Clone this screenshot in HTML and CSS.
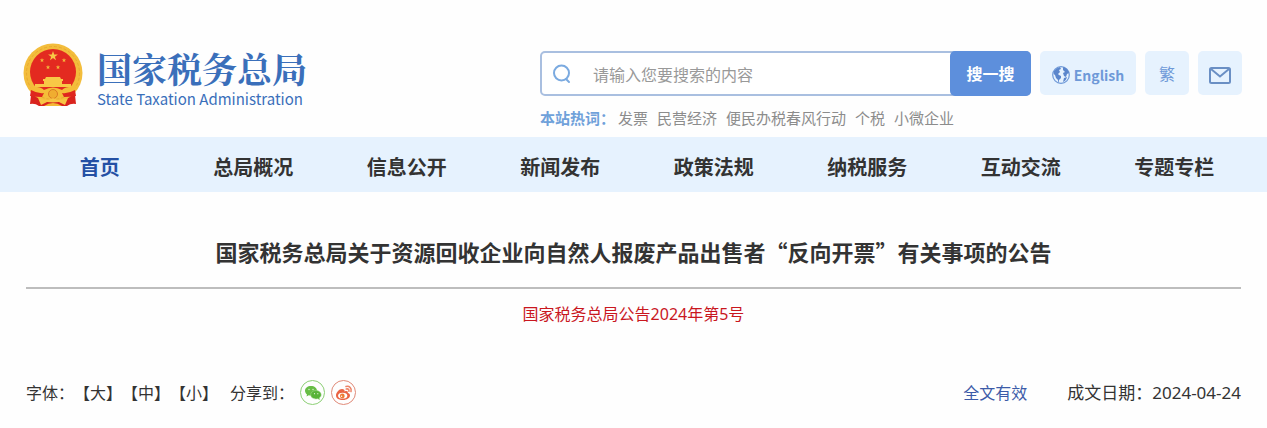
FILE: index.html
```html
<!DOCTYPE html>
<html lang="zh-CN">
<head>
<meta charset="utf-8">
<meta name="viewport" content="width=device-width, initial-scale=1">
<title>国家税务总局</title>
<link rel="stylesheet" href="styles.css">
</head>
<body>
<header class="header">
  <a class="brand" href="#">
    <svg class="emblem" viewBox="0 0 60 64" aria-hidden="true">
      <path d="M9 43L7 61q5-1 9 2h28q4-3 9-2l-2-18z" fill="#d9231d"/>
      <circle cx="30" cy="30" r="29.500" fill="#f3bd3c"/>
      <circle cx="30" cy="30" r="26.500" fill="none" stroke="#e9a92f" stroke-width="1" stroke-dasharray="3 2"/>
      <circle cx="30" cy="29" r="23" fill="#e32a20"/>
      <path d="M30 8l1.200 3.500h3.700l-3 2.200 1.100 3.600-3-2.200-3 2.200 1.100-3.600-3-2.200h3.700z" fill="#f8c846"/>
      <g fill="#f3b53b"><path d="M19 15l.6 1.600h1.700l-1.400 1 .5 1.700-1.400-1-1.400 1 .5-1.700-1.400-1h1.700z"/><path d="M41 15l.6 1.600h1.700l-1.400 1 .5 1.700-1.400-1-1.400 1 .5-1.700-1.400-1h1.700z"/><path d="M25 22l.6 1.600h1.700l-1.400 1 .5 1.700-1.400-1-1.400 1 .5-1.700-1.400-1h1.700z"/><path d="M35 22l.6 1.600h1.700l-1.400 1 .5 1.700-1.400-1-1.400 1 .5-1.700-1.400-1h1.700z"/></g>
      <path d="M23 34h14l1 2h2v2h-1v3h9v3H12v-3h9v-3h-1v-2h2z" fill="#f8c846"/>
      <path d="M7 44q10-1 14 3 9-5 18 0 4-4 14-3-2 6-8 9-4-1-8 1-7-4-14 0-4-2-8-1-6-3-8-9z" fill="#f5bd38"/>
      <path d="M8 47q7 4 13 3l-2 4q-6 0-12-1zM52 47q-7 4-13 3l2 4q6 0 12-1z" fill="#df261e"/>
      <circle cx="30" cy="51" r="4.500" fill="#f0ad30" stroke="#dc7a24"/>
      <path d="M15 55q9 4 15 0 6 4 15 0l-3 7-6-3H24l-6 3z" fill="#f7c545"/>
      <path d="M21 63q9-6 18 0z" fill="#f3b936"/>
    </svg>
    <span class="brand-text">
      <span class="brand-name">国家税务总局</span>
      <span class="brand-en">State Taxation Administration</span>
    </span>
  </a>
  <div class="tools">
    <div class="tool-row">
      <form class="search">
        <svg class="search-icon" viewBox="0 0 20 20" aria-hidden="true"><circle cx="9.500" cy="9" r="7.500"/><path d="M14 15l3 3"/></svg>
        <input class="search-input" type="text" aria-label="搜索" placeholder="请输入您要搜索的内容">
        <button class="search-button" type="button">搜一搜</button>
      </form>
      <a class="tile tile-wide" href="#">
        <svg class="globe" viewBox="0 0 18 18" aria-hidden="true"><circle cx="9" cy="9" r="8.300" fill="#e6f2fe" stroke="#6e99d8" stroke-width="1.200"/><path d="M2 5q2-3 6-4l1 2-2 1 1 2-2 2 1 1 2 1v2l-2 2v3q-1-1-1-3l-2-2-1-3q-2-1-1-4zM11 1q5 1 6 6l-2 1-1 3-2-1-1-3 2-1-2-2zM12 12l3-1q-1 4-4 5z" fill="#5b86cc"/></svg>
        English
      </a>
      <a class="tile" href="#">繁</a>
      <a class="tile" href="#" aria-label="邮箱">
        <svg class="mail" viewBox="0 0 22 17" aria-hidden="true"><rect x="1" y="1" width="20" height="15" rx="1.500"/><path d="M2 2l9 7.500L20 2"/></svg>
      </a>
    </div>
    <div class="hot">
      <strong class="hot-label">本站热词：</strong>
      <a href="#">发票</a><a href="#">民营经济</a><a href="#">便民办税春风行动</a><a href="#">个税</a><a href="#">小微企业</a>
    </div>
  </div>
</header>
<nav class="nav">
  <a class="active" href="#">首页</a><a href="#">总局概况</a><a href="#">信息公开</a><a href="#">新闻发布</a><a href="#">政策法规</a><a href="#">纳税服务</a><a href="#">互动交流</a><a href="#">专题专栏</a>
</nav>
<main class="article">
  <h1 class="title">国家税务总局关于资源回收企业向自然人报废产品出售者“反向开票”有关事项的公告</h1>
  <p class="number">国家税务总局公告2024年第5号</p>
  <div class="meta">
    <span class="label">字体：</span>
    <div class="sizes"><button type="button">【大】</button><button type="button">【中】</button><button type="button">【小】</button></div>
    <span class="share-label">分享到：</span>
    <a class="share wechat" href="#" aria-label="微信">
      <svg viewBox="0 0 18 18" aria-hidden="true"><path d="M7 2C3.500 2 1 4.100 1 6.800c0 1.500.8 2.800 2 3.700l-.5 2 2.200-1.200c.8.200 1.500.3 2.300.3 3.500 0 6-2.100 6-4.800S10.500 2 7 2z" fill="#67bd45"/><path d="M12 6.500c-3 0-5.300 1.900-5.300 4.300S9 15 12 15l1.800-.3 2 1.100-.5-1.800c1.200-.8 1.900-1.900 1.900-3.200 0-2.400-2.200-4.300-5.200-4.300z" fill="#58b338" stroke="#a9dc95" stroke-width=".5"/><g fill="#dff2d8"><circle cx="5" cy="5.500" r=".7"/><circle cx="9" cy="5.500" r=".7"/><circle cx="10.500" cy="9.700" r=".6"/><circle cx="13.800" cy="9.700" r=".6"/></g></svg>
    </a>
    <a class="share weibo" href="#" aria-label="微博">
      <svg viewBox="0 0 18 18" aria-hidden="true"><path d="M7 5C4 5 1 8.500 1 11.500S4 16 8 16s7-2.200 7-4.500c0-1.500-1-2.200-2.200-2.500.4-1.500-.5-2.600-3.300-1.500C10 6 9 5 7 5z" fill="#ea6444"/><ellipse cx="7.700" cy="11.700" rx="4.600" ry="2.900" fill="#fff"/><circle cx="7.300" cy="11.900" r="2.400" fill="#ed7b35"/><circle cx="6.600" cy="12.200" r=".7" fill="#fff"/><path d="M11 2.500c3.500-1 6 2 5 5M11.300 5c2-.5 3 .8 2.600 2.300" fill="none" stroke="#ee8468" stroke-width="1.600" stroke-linecap="round"/></svg>
    </a>
    <span class="status">全文有效</span>
    <span class="date">成文日期：<time datetime="2024-04-24">2024-04-24</time></span>
  </div>
</main>
</body>
</html>
```
FILE: styles.css
```css
* { box-sizing: border-box; }
body {
  margin: 0;
  background: #fefefe;
  color: #333;
  font: 16px/24px "Noto Sans", "Noto Sans CJK SC", sans-serif;
}
a { color: inherit; text-decoration: none; }
button { border: 0; padding: 0; background: none; color: inherit; font: inherit; cursor: pointer; }

.header {
  display: flex;
  justify-content: space-between;
  gap: 24px;
  padding: 43px 25px 7px 23px;
}
.brand { display: flex; align-items: flex-start; gap: 14px; color: #3a6fba; }
.emblem { width: 60px; height: 64px; flex: none; }
.brand-text { display: flex; flex-direction: column; white-space: nowrap; }
.brand-name {
  font: 700 35px/50px "Noto Serif CJK SC", "Source Han Serif SC", "Noto Sans CJK SC", serif;
}
.brand-en { font: 400 15px/12px "Noto Sans CJK SC", sans-serif; }

.tools { flex: 0 1 702px; padding-top: 8px; }
.tool-row { display: flex; gap: 9px; }
.search {
  flex: 1;
  display: flex;
  align-items: center;
  min-width: 0;
  height: 45px;
  border: 2px solid #a9bfe0;
  border-radius: 5px;
  padding-left: 10px;
  background: #fff;
}
.search-icon { width: 20px; height: 20px; flex: none; fill: none; stroke: #7baae0; stroke-width: 2; stroke-linecap: round; }
.search-input {
  flex: 1;
  min-width: 0;
  border: 0;
  outline: 0;
  padding: 0 0 0 21px;
  background: none;
  font: 16px/24px "Noto Sans CJK SC", sans-serif;
}
.search-input::placeholder { color: #999; opacity: 1; }
.search-button {
  width: 81px;
  height: 45px;
  margin-right: -2px;
  flex: none;
  border-radius: 5px;
  background: #5d8fdc;
  color: #fff;
  font-weight: 700;
}
.tile {
  display: flex;
  align-items: center;
  justify-content: center;
  width: 44px;
  height: 44px;
  flex: none;
  border-radius: 5px;
  background: #e6f2fe;
  color: #6e99d8;
  font-family: "Noto Sans CJK SC", sans-serif;
}
.tile-wide { width: 96px; gap: 4px; font-size: 14px; font-weight: 700; padding-top: 4px; }
.globe { width: 18px; height: 18px; }
.mail { width: 22px; height: 17px; margin-top: 4px; fill: none; stroke: #6a8fc4; stroke-width: 2; }

.hot { display: flex; flex-wrap: wrap; gap: 0 9px; margin-top: 10px; font-size: 15px; color: #8c8c8c; }
.hot-label { color: #6fa1da; margin-right: -6px; }

.nav { display: flex; padding: 0 16px 0 23px; background: #e6f2fe; }
.nav a { flex: 1; padding-top: 7px; text-align: center; font-size: 20px; line-height: 48px; font-weight: 700; white-space: nowrap; }
.nav .active { color: #2450a4; }

.article { padding: 43px 26px 0; }
.title {
  margin: 0;
  padding-bottom: 20px;
  border-bottom: 2px solid #bdbdbd;
  text-align: center;
  font: 700 22px/32px "Noto Sans CJK SC", sans-serif;
}
.number { margin: 13px 0 54px; text-align: center; color: #c9171e; }
.meta { display: flex; align-items: center; white-space: nowrap; }
.sizes { display: flex; }
.share-label { margin-left: 12px; }
.share {
  display: flex;
  align-items: center;
  justify-content: center;
  width: 25px;
  height: 25px;
  border: 1px solid #8ccf75;
  border-radius: 50%;
  margin-left: 6px;
}
.share svg { width: 18px; height: 18px; flex: none; }
.weibo { border-color: #e08a78; }
.status { margin-left: auto; color: #3c5ba8; }
.date { margin-left: 40px; font-size: 17px; }
```
